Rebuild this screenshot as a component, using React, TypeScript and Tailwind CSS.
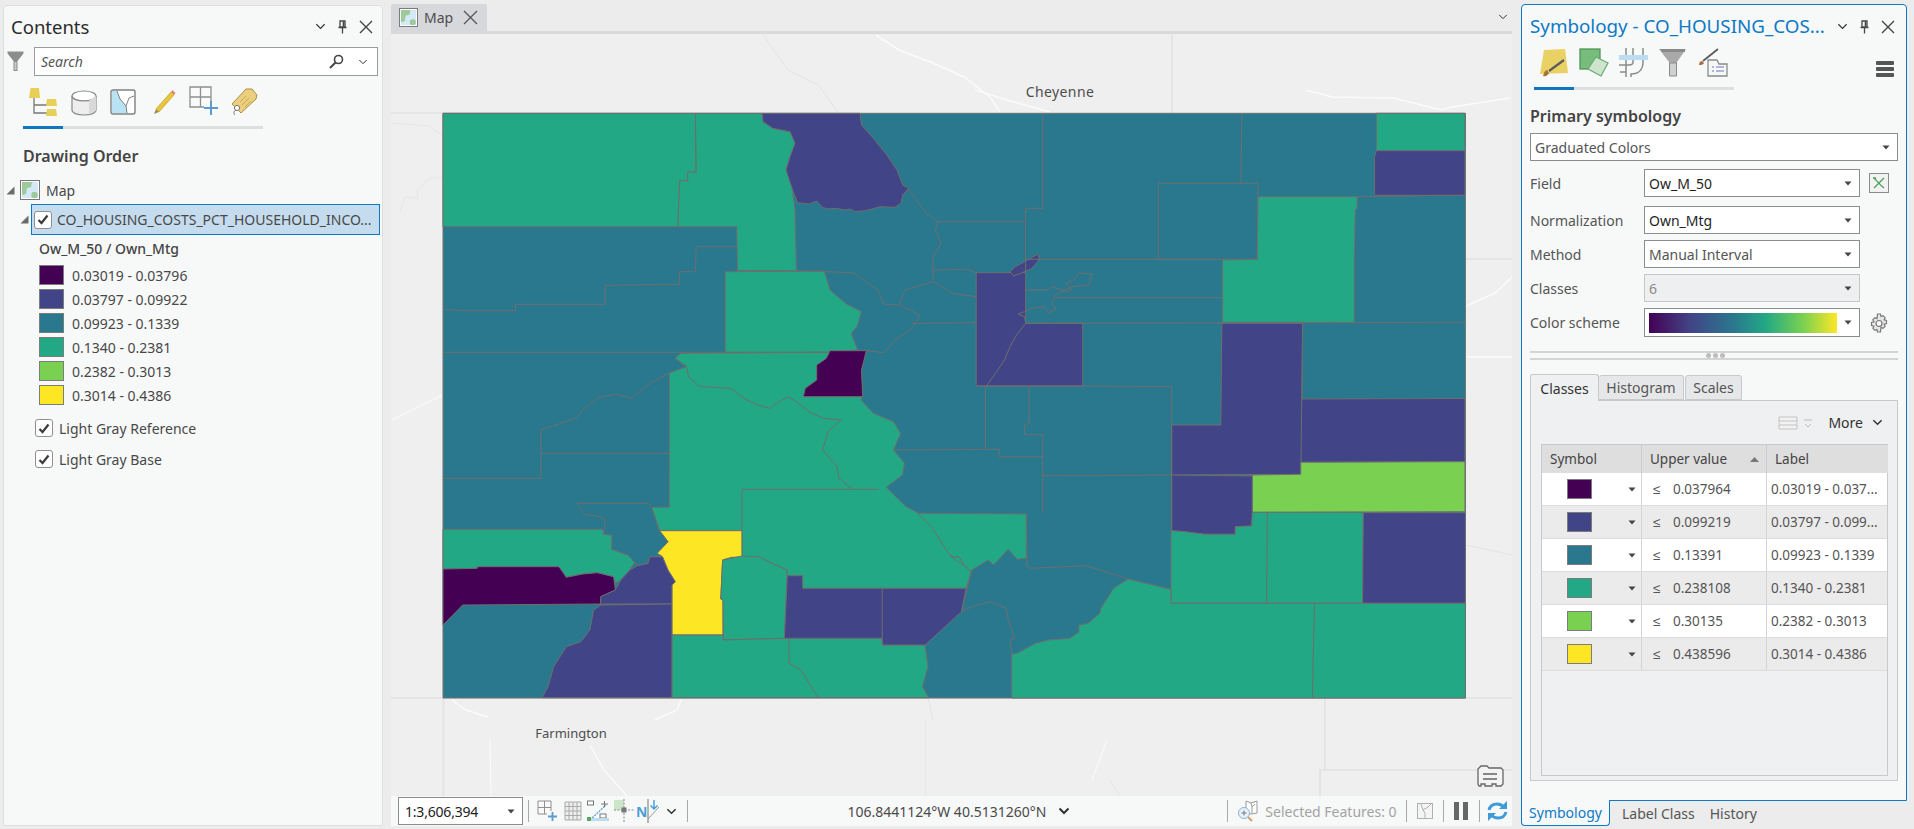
import React from 'react';

const TEAL = '#2a788e';
const GREEN = '#22a884';
const INDIGO = '#414487';
const PURPLE = '#440154';
const LIME = '#7ad151';
const YELLOW = '#fde725';

const counties: { fill: string; pts: string }[] = [
  // north west
  { fill: GREEN, pts: '443,113.3 695.4,113.3 696.2,172 687.7,172 687.7,180.7 679.7,180.7 677.8,226.7 443,226.7' },
  { fill: GREEN, pts: '695.4,113.3 762,113.3 763,121.7 772.7,128.3 790,131.7 795,143.3 790,156.7 786,170 792,186.7 795,210 796.4,270.7 737.5,270.7 736.7,226.7 677.8,226.7 679.7,180.7 687.7,180.7 687.7,172 696.2,172' },
  { fill: INDIGO, pts: '762,113.3 860,113.3 861.5,125 872,136.7 885.6,153.3 897,170 902.8,185 908.5,188.3 902.8,195 900.9,203.3 895,207.3 880,206.7 872,209 864.5,210.7 855,211.7 850,209 845,210 835.8,208.3 828,209 822.4,207.3 816.7,201 809,204 797.6,202.7 792.6,190 786,170 790,156.7 795,143.3 790,131.7 772.7,128.3 763,121.7' },
  { fill: GREEN, pts: '725.2,271.7 824.4,271 830,290 845.4,303.3 861.5,311.7 856.9,326.7 851.1,333.3 857.7,350 826.3,352.3 725.2,352.3' },
  // centre
  { fill: GREEN, pts: '675.1,358.3 680.8,353.3 826.3,352.3 866.4,350.7 861.5,370 862.6,396.7 860.8,400 873.5,413.3 893.5,421.7 900.7,433.3 893.5,450 904.4,463.3 902.6,475 886.2,487.3 906.2,506.7 918.9,513.3 1026.3,514 1026.3,558.3 1017.2,559.3 1008.2,549.3 993.6,565 988.2,560 971.8,570 967.2,588.3 802.6,588.3 802.6,575.7 787.3,575.7 787.3,570 771.7,563.3 759,556.7 741.9,557.3 741.9,530.7 659.7,530.7 651.7,507.3 669.2,507.3 669.4,372.7 686.6,366.7' },
  { fill: PURPLE, pts: '830,350.7 866.4,350.7 861.5,370 862.6,396.7 803.3,396.7 805.2,388.3 816.7,380 816.7,365 826.3,358.3' },
  // south west
  { fill: GREEN, pts: '443,529.3 602.7,529.3 603.8,534.3 611.8,535 611.8,549.3 628.1,555 635.4,561.7 628.1,571.7 620.8,580 615.4,583.3 613.6,576.7 597.2,572.7 582.7,574 566.3,577.3 559,566.7 477.3,566.7 477.3,568.3 443,569' },
  { fill: TEAL, pts: '577.2,503.3 648.1,503.3 651.7,507.3 659,530 668.1,541.7 657.2,553.3 662.6,556.7 649.9,556.7 648.1,563.3 637.2,565.7 628.1,555 611.8,549.3 611.8,535 603.8,534.3 605.2,520 600.8,516.7 584.5,514.3' },
  { fill: PURPLE, pts: '443,569 477.3,568.3 477.3,566.7 559,566.7 566.3,577.3 582.7,574 597.2,572.7 613.6,576.7 615.4,590 600.8,596.7 600.8,604 462.7,605 443,625' },
  { fill: INDIGO, pts: '600.8,596.7 615.4,590 620.8,580 629.9,570 637.2,565.7 648.1,563.3 649.9,556.7 662.6,556.7 668.1,570 675.4,581.7 672.1,585 672.1,604 600.8,604' },
  { fill: INDIGO, pts: '600.8,605 672.1,604 672.1,697.7 542,697.7 548.1,686.7 553.6,666.7 566.3,646.7 580.9,641.7 589.9,630 593.6,610' },
  { fill: YELLOW, pts: '659.7,530.7 741.9,530.7 741.9,557.3 731.7,557.3 722.6,560 720.8,599 723,600 723,635 672.1,635 672.1,585 675.4,581.7 668.1,570 662.6,556.7 657.2,553.3 668.1,541.7' },
  { fill: GREEN, pts: '722.6,560 741.9,556 759,556.7 771.7,563.3 787.3,570 784.4,638.3 723.3,640 723,600 720.8,599' },
  { fill: GREEN, pts: '672.1,635 723,635 723.3,640 784.4,638.3 881.8,638.3 882.6,645 925.1,645 928,666.7 922.5,686.7 928.7,697.7 672.1,697.7' },
  { fill: INDIGO, pts: '787.3,575.7 802.6,575.7 802.6,588.3 967.2,588.3 961.4,611.7 925.1,645 882.6,645 881.8,638.3 784.4,638.3' },
  // north east
  { fill: GREEN, pts: '1376.4,113.3 1465,113.3 1465,150.7 1376.4,150.7' },
  { fill: INDIGO, pts: '1376.4,150.7 1465,150.7 1465,195.3 1374.6,195.3 1374.6,156.7' },
  { fill: GREEN, pts: '1257.9,196.7 1357.1,196.7 1357.1,208.3 1355.3,210 1354.2,263 1354.2,322.3 1222.6,322.3 1222.6,260 1257.2,259.3' },
  { fill: INDIGO, pts: '976.2,272.7 1025.6,272.7 1025.6,323.3 1082.7,323.3 1082.7,386 976.2,386' },
  { fill: INDIGO, pts: '1010,271.7 1015.4,266.7 1026.3,260.7 1038.3,254 1039,260 1031.8,268.3 1020.9,273.3 1013.6,276' },
  { fill: INDIGO, pts: '1221.9,323.3 1302.6,323.3 1302,399 1465,398.5 1465,461.7 1300.8,462.3 1300.8,474.3 1171.7,475 1171.7,425 1220.8,425' },
  // south east
  { fill: INDIGO, pts: '1171.7,475 1252.4,476 1252.4,512.3 1251.7,526 1235.3,526.7 1235.3,534.3 1204.5,534.3 1184.5,531.7 1171.7,530.7' },
  { fill: LIME, pts: '1252.4,475 1300.8,474.3 1300.8,462.3 1465,461.7 1465,511.7 1252.4,512.3' },
  { fill: GREEN, pts: '1171,530.7 1184.5,531.7 1204.5,534.3 1235.3,534.3 1235.3,526.7 1251.7,526 1252.4,512.3 1363.3,512.3 1362.6,603.3 1171,603.3' },
  { fill: INDIGO, pts: '1363.3,512.7 1465.4,512.7 1465.4,603.3 1362.6,603.3' },
  { fill: GREEN, pts: '1011.8,698 1011.8,654.3 1017.2,653.3 1035.4,643.3 1048.1,640 1070,638.3 1079,631.7 1079,625 1088.1,623.3 1099.8,613.3 1100.9,608.3 1113.6,588.3 1128.1,579 1171,589.3 1171,603.3 1465.4,603.3 1465.4,698' },
];

const boundaries = [
  '443,309.3 466.5,310.7 515.5,310.7 515.5,304.3 605,304.3 605,285.3 679.3,284.3 679.3,271.7 695.4,271.7 696.2,246.7 736.7,246.7',
  '443,352.3 826.3,352.3',
  '796.4,270.7 853,272.7 868.4,283.3 877.9,290 883.7,304 899,305 904.7,290 933.4,281.7 932.7,270 933.4,256.7 941.1,243.3 935.3,230 938,221.7 925.8,213.3 914.3,196.7 908.5,188.3',
  '899,305 920,315 912.4,328.3 895.2,340 883.7,352.7 866.4,350.7',
  '938,221.7 1025.6,221.7',
  '933.4,270 966.4,269.3 976.2,272.7',
  '933.4,281.7 952.6,293.3 976.2,296.7',
  '912.4,323.3 976.2,322.7',
  '1042.7,113.3 1042.7,208.3 1025.6,208.3 1025.6,272.7',
  '1241.9,113.3 1240.8,183.3',
  '1158.3,183.3 1257.9,183.3 1257.9,196.7 1257.2,259.3 1158.3,259.3 1158.3,183.3',
  '1357,196.5 1465,195.3',
  '1025.6,259.3 1222.6,259.3',
  '1055.4,297.7 1222.6,297.7',
  '1025.6,323.3 1465,322.3',
  '1302.6,323.3 1301,462',
  '1082.7,386 1171.7,386.7 1171.7,475',
  '976.2,386 1082.7,386',
  '1025.6,323.3 1015.4,336.7 1010,346.7 1004.5,360 995.4,373.3 986.4,386',
  '1025.6,290 1048.1,290 1051.8,286.7 1068.1,291.7 1071.8,290 1065.6,283.3 1073.6,280 1079,272.7 1091.8,274 1089.2,285 1071.8,286.7 1055.4,295 1051.8,303.3 1056.1,309.3 1048.1,313.3 1044.5,306.7 1031.8,308.3 1024.5,311.7 1018,314 1024.5,316.7 1025.6,323.3',
  '985.5,386.7 985.5,449.3',
  '1029.2,386 1029.2,423.3 1024.5,425 1024.5,434.3 1042.7,435 1042.7,513.3',
  '893.5,450 999,449.3 999,456.7 1042.7,456.7',
  '1042.7,475.7 1171.7,475',
  '1171.7,475 1171.7,530',
  '1026.3,514 1027,566.7 1030.7,568.3 1086.3,565.7 1128.1,579',
  '950,556.7 959,557 964.5,565.7 971,571.7',
  '961.4,611.7 971.8,606.7 990,601.7 1006.3,608.3 1008.2,620 1014.7,638.3 1010,640 1011.8,654.3',
  '971.8,570 966.4,586.7 961.4,611.7',
  '1267.3,512.3 1266.6,603.3',
  '1314.6,603.3 1313.5,643.3 1312.4,697.7',
  '882.2,588.3 882.2,645',
  '789,638.3 789,663.3 800.8,670 818.2,697.7',
  '917,513.3 931.6,526.7 946.2,550 953.4,558.3 968,568.3',
  '741.9,530.7 741.9,489.3 878.9,489.3',
  '793.5,400 811.7,413.3 824.4,418.3 840.8,420 828,431.7 822.6,450 837.1,466.7 838.9,478.3 851.7,488.3',
  '675.1,358.3 686.6,366.7 688.5,376.7 700,386.7 730.6,388.3 744,398.3 757.2,405 769.9,408.3 779,401.7 788,396.7 793.5,400',
  '669.4,372.7 650.2,383.3 631,398.3 615.8,394 596.7,398.3 595.4,400 582.7,410 575.4,418.3 540.9,430 540.9,478.3 443,478.3',
  '540.9,453.3 669.2,453.3',
];

const baseRoads = [
  { d: '443,113 391,113', c: '#e5e5e5', w: 2 },
  { d: '1172,34 1172,113', c: '#e4e4e4', w: 2 },
  { d: '1465,259 1512,259', c: '#e4e4e4', w: 2 },
  { d: '391,698 1512,698', c: '#e4e4e4', w: 2 },
  { d: '443.5,698 443.5,796', c: '#e4e4e4', w: 2 },
  { d: '1325,698 1325,770', c: '#e4e4e4', w: 2 },
  { d: '1320,796 1320,770 1512,770', c: '#e4e4e4', w: 2 },
  { d: '925.5,720 925.5,796', c: '#e8e8e8', w: 1.5 },
  { d: '763,35 788,70 818.6,85 837.7,112', c: '#e4e4e4', w: 1 },
  { d: '876,35 899,50 933,63 964,77 990,97 1000,112', c: '#fbfbfb', w: 1.5 },
  { d: '975,90 1007,100 1050,112', c: '#fbfbfb', w: 1.5 },
  { d: '1306,90 1332,97 1393,98 1441,110 1452,107 1510,98', c: '#fbfbfb', w: 1.5 },
  { d: '392,123 428,126 442,135', c: '#e6e6e6', w: 1 },
  { d: '400,212 405,197 418,198 417,190 430,178 443,178', c: '#e6e6e6', w: 1 },
  { d: '1464,307 1495,293 1512,277', c: '#fbfbfb', w: 1.5 },
  { d: '1465,357 1512,357', c: '#fbfbfb', w: 1.5 },
  { d: '1466,545 1512,555', c: '#e4e4e4', w: 1 },
  { d: '452,700 466,710 488,717', c: '#fbfbfb', w: 1.5 },
  { d: '681,700 677,710 655,720', c: '#fbfbfb', w: 1.5 },
  { d: '928,698 933,720', c: '#e4e4e4', w: 1 },
  { d: '590,745 604,770 627,796', c: '#fbfbfb', w: 1.5 },
  { d: '490,740 491,796', c: '#fbfbfb', w: 1 },
  { d: '1107,740 1092,780', c: '#fbfbfb', w: 1 },
  { d: '1110,780 1120,796', c: '#e4e4e4', w: 1 },
  { d: '391,420 443,395', c: '#f7f7f7', w: 1.5 },
];

const legend = [
  { color: PURPLE, label: '0.03019 - 0.03796', upper: '0.037964', cell: '0.03019 - 0.037...' },
  { color: INDIGO, label: '0.03797 - 0.09922', upper: '0.099219', cell: '0.03797 - 0.099...' },
  { color: TEAL, label: '0.09923 - 0.1339', upper: '0.13391', cell: '0.09923 - 0.1339' },
  { color: GREEN, label: '0.1340 - 0.2381', upper: '0.238108', cell: '0.1340 - 0.2381' },
  { color: LIME, label: '0.2382 - 0.3013', upper: '0.30135', cell: '0.2382 - 0.3013' },
  { color: YELLOW, label: '0.3014 - 0.4386', upper: '0.438596', cell: '0.3014 - 0.4386' },
];

function Caret({ className = '' }: { className?: string }) {
  return (
    <svg width="8" height="5" viewBox="0 0 8 5" className={className}>
      <path d="M0.5 0.5h7L4 4.5z" fill="#444" />
    </svg>
  );
}

function Chevron({ size = 12, w = 1.6 }: { size?: number; w?: number }) {
  return (
    <svg width={size} height={size} viewBox="0 0 12 12" fill="none" stroke="#333" strokeWidth={w}>
      <path d="M1.5 3.5 6 8l4.5-4.5" />
    </svg>
  );
}

function PaneButtons() {
  return (
    <div className="flex items-center gap-[11px]">
      <Chevron size={11} w={1.3} />
      <svg width="11" height="14" viewBox="0 0 11 14" fill="none" stroke="#444" strokeWidth="1.3">
        <path d="M3 1h5v6H3zM1.5 7.5h8M5.5 8v5.5" />
        <path d="M6.500 1.500v5" strokeWidth="1.6" />
      </svg>
      <svg width="14" height="14" viewBox="0 0 14 14" stroke="#444" strokeWidth="1.4">
        <path d="M1 1l12 12M13 1 1 13" />
      </svg>
    </div>
  );
}

function Checkbox() {
  return (
    <span className="flex h-[18px] w-[18px] shrink-0 items-center justify-center rounded-[3px] border border-[#8f8f8f] bg-white">
      <svg width="12" height="11" viewBox="0 0 12 11" fill="none" stroke="#3c3c3c" strokeWidth="2.2">
        <path d="M1.5 6 4.5 9 10.5 1.5" />
      </svg>
    </span>
  );
}

function TreeArrow() {
  return (
    <svg width="9" height="9" viewBox="0 0 9 9">
      <path d="M8.5 0.5v8h-8z" fill="#6b6b6b" />
    </svg>
  );
}

function MapThumb({ size = 20 }: { size?: number }) {
  return (
    <svg width={size} height={size} viewBox="0 0 20 20">
      <rect x="0.5" y="0.5" width="19" height="19" fill="#fff" stroke="#777" />
      <rect x="2" y="2" width="16" height="16" fill="#d3e9f5" />
      <path d="M2 2h10l-1 5-4 1-1 6-4 1z" fill="#9dc99b" />
      <circle cx="14.5" cy="15" r="3.2" fill="#9dc99b" />
    </svg>
  );
}

function SelectBox({ value, disabled = false, dark = false }: { value: string; disabled?: boolean; dark?: boolean }) {
  return (
    <div
      className={`flex h-[28px] w-[216px] items-center justify-between border pl-[4px] pr-[7px] text-[14px] ${
        disabled ? 'border-[#c6c6c6] bg-[#eeeff0] text-[#8a8a8a]' : 'border-[#8c8c8c] bg-white'
      } ${dark ? 'text-[#1f1f1f]' : disabled ? '' : 'text-[#555]'}`}
    >
      <span>{value}</span>
      <Caret />
    </div>
  );
}

function FieldRow({ label, children, tail, className = '' }: { label: string; children: React.ReactNode; tail?: React.ReactNode; className?: string }) {
  return (
    <div className={`flex items-center ${className}`}>
      <span className="w-[114px] text-[14px] text-[#555]">{label}</span>
      {children}
      {tail}
    </div>
  );
}

function ContentsTabs() {
  return (
    <div className="flex h-[28px] items-end pl-[25px]">
      <svg width="30" height="28" viewBox="0 0 30 28" className="mr-[11px]">
        <path d="M5 10v15h13M5 17h13" fill="none" stroke="#777" strokeWidth="1.3" />
        <path d="M1.500 0h8.500l1 10H0z" fill="#e8cf58" />
        <path d="M18 11h9l1 7H17zM18 21h9l1 7H17z" fill="#e8cf58" />
      </svg>
      <svg width="28" height="28" viewBox="0 0 28 28" className="mr-[12px]">
        <ellipse cx="14" cy="8" rx="12" ry="5" fill="#fff" stroke="#8a8a8a" strokeWidth="1.2" />
        <path d="M2 8v14c0 3 5 5 12 5s12-2 12-5V8c0 3-5 5-12 5S2 11 2 8z" fill="#eee" stroke="#8a8a8a" strokeWidth="1.2" />
        <path d="M19 12.500v14l7-4V8z" fill="#d9d9d9" />
      </svg>
      <svg width="26" height="27" viewBox="0 0 26 27" className="mr-[15px]">
        <rect x="1" y="1" width="24" height="24" rx="2" fill="#fff" stroke="#808080" strokeWidth="1.4" />
        <path d="M2 2h5l3 8 6 7 1 7H2z" fill="#b9e2f5" />
        <path d="M7 2l3 8 6 7 1 7M16 17l3-8 5-2" fill="none" stroke="#808080" strokeWidth="1" />
      </svg>
      <svg width="26" height="28" viewBox="0 0 26 28" className="mr-[12px]">
        <path d="M5 21 20 4l3 3L8 24z" fill="#e9c53a" stroke="#b79a2b" strokeWidth="0.6" />
        <path d="M20 4l1.500-2 3 3-1.500 2z" fill="#e2857a" />
        <path d="M5 21l-2 5 5-2z" fill="#a08a58" />
      </svg>
      <svg width="30" height="30" viewBox="0 0 30 30" className="mr-[11px]">
        <path d="M1 1h21v20H1zM1 11h21M11.500 1v20" fill="#fafafa" stroke="#8f8f8f" strokeWidth="1.3" />
        <rect x="15" y="16" width="15" height="12" fill="#f7f8f8" />
        <path d="M22 15v14M15 22h14" stroke="#5b9bd2" strokeWidth="2" />
      </svg>
      <svg width="28" height="28" viewBox="0 0 28 28">
        <path d="M16 1h6l5 6-1 4L11 25 2 16z" fill="#eccf7e" stroke="#a98f4c" strokeWidth="1" />
        <path d="M10 14l6-6M12 17l7-7M15 19l6-6" stroke="#c7a850" strokeWidth="0.9" />
        <circle cx="7" cy="20" r="2.600" fill="#fff" stroke="#777" />
        <path d="M6 22c-2 1-3 3-1 5" fill="none" stroke="#777" />
      </svg>
    </div>
  );
}

function SymbologyTabs() {
  return (
    <div className="flex h-[29px] items-end pl-[10px]">
      <svg width="30" height="29" viewBox="0 0 30 29" className="mr-[9px]">
        <path d="M4 2 25 1l3 24-28 1z" fill="#ead163" />
        <path d="M3 28c3 1 5-1 6-3l-2-3c-3 1-3 4-4 6z" fill="#a5723c" />
        <path d="M9 23 24 12" stroke="#5c5c5c" strokeWidth="2.200" />
      </svg>
      <svg width="30" height="29" viewBox="0 0 30 29" className="mr-[10px]">
        <rect x="1" y="1" width="20" height="20" fill="#77bb7d" stroke="#4f9657" strokeWidth="1.300" />
        <path d="M17 9 29 15 22 28 9 21z" fill="#cde5cd" stroke="#6aa971" strokeWidth="1.200" />
      </svg>
      <svg width="29" height="29" viewBox="0 0 29 29" fill="none" stroke="#8a8a8a" strokeWidth="1.500" className="mr-[11px]">
        <rect x="0" y="7" width="29" height="5" fill="#bcdcf0" stroke="none" />
        <path d="M7 0v7M7 12v17M14 0v7M24 0v7" />
        <path d="M0 17h7M14 12v2c0 2-2 3-4 3H7M24 12v2c0 8-5 12-12 12v3" />
        <path d="M1 24h6" />
      </svg>
      <svg width="28" height="29" viewBox="0 0 28 29" className="mr-[11px]">
        <path d="M0 1h27L18 14v14h-8V14z" fill="#a9a9a9" />
        <path d="M1 1h25v3H3z" fill="#8a8a8a" />
        <path d="M10.500 15h7v13h-7z" fill="#d0d0d0" stroke="#8a8a8a" />
      </svg>
      <svg width="30" height="29" viewBox="0 0 30 29">
        <path d="M10 12h9l2 4h8v12H10z" fill="#f7f7f7" stroke="#8a8a8a" strokeWidth="1.300" />
        <path d="M14 19h2M18 19h8M14 23h2M18 23h8" stroke="#6678b5" strokeWidth="1.200" />
        <path d="M1 17c2 0 4 0 5-2l-2-2c-2 0-3 2-3 4z" fill="#a5723c" />
        <path d="M5 13 20 1" stroke="#5c5c5c" strokeWidth="1.800" />
      </svg>
    </div>
  );
}

function ContentsPane() {
  return (
    <aside className="ml-[3px] mt-[5px] flex h-[821px] w-[380px] flex-col rounded-t-[4px] border border-[#dedede] bg-[#f7f8f8] text-[#484848]">
      <div className="flex h-[41px] items-center justify-between pl-[7px] pr-[9px]">
        <span className="text-[18.5px] text-[#2b2b2b]">Contents</span>
        <PaneButtons />
      </div>
      <div className="flex h-[29px] items-center">
        <svg width="17" height="21" viewBox="0 0 17 21" className="ml-[3px]">
          <path d="M0.5 0.5h16v2L10.5 10v10h-4V10L0.5 2.500z" fill="#8d8d8d" />
          <path d="M7.500 11h2v8h-2z" fill="#c9c9c9" />
        </svg>
        <div className="ml-[10px] flex h-[29px] w-[344px] items-center border border-[#9a9a9a] bg-white pl-[6px] pr-[9px]">
          <span className="text-[14px] italic text-[#555]">Search</span>
          <svg width="15" height="15" viewBox="0 0 15 15" fill="none" stroke="#444" strokeWidth="1.6" className="ml-auto mr-[14px]">
            <circle cx="9.5" cy="5.5" r="4" />
            <path d="M6.5 8.5 1 14" strokeWidth="2" />
          </svg>
          <Chevron size={10} w={1.2} />
        </div>
      </div>
      <div className="mt-[12px]">
        <ContentsTabs />
      </div>
      <div className="ml-[19px] mt-[10px] flex h-[3px] w-[240px] bg-[#dedede]">
        <div className="h-full w-[40px] bg-[#0e76bd]" />
      </div>
      <div className="ml-[19px] mt-[16px] text-[16px] font-semibold leading-[22px] text-[#444]">Drawing Order</div>
      <div className="mt-[11px] flex h-[24px] items-center pl-[2px]">
        <TreeArrow />
        <span className="ml-[5px]"><MapThumb /></span>
        <span className="ml-[6px] text-[14px]">Map</span>
      </div>
      <div className="mt-[2px] flex items-center">
        <span className="ml-[16px]"><TreeArrow /></span>
        <div className="ml-[2px] flex h-[31px] w-[349px] items-center border border-[#0e7ac4] bg-[#c5dcef] pl-[2px]">
          <Checkbox />
          <span className="ml-[5px] whitespace-nowrap text-[14px]">CO_HOUSING_COSTS_PCT_HOUSEHOLD_INCO...</span>
        </div>
      </div>
      <div className="ml-[35px] mt-[4px] text-[14px] font-medium leading-[20px] text-[#444]">Ow_M_50 / Own_Mtg</div>
      <div className="ml-[35px] mt-[6px] flex flex-col gap-[4px]">
        {legend.map((item) => (
          <div key={item.label} className="flex h-[20px] items-center">
            <span className="h-[20px] w-[25px] border border-[#7c7c7c]" style={{ backgroundColor: item.color }} />
            <span className="ml-[8px] text-[14px]">{item.label}</span>
          </div>
        ))}
      </div>
      <div className="ml-[31px] mt-[11px] flex h-[24px] items-center">
        <Checkbox />
        <span className="ml-[6px] text-[14px]">Light Gray Reference</span>
      </div>
      <div className="ml-[31px] mt-[7px] flex h-[24px] items-center">
        <Checkbox />
        <span className="ml-[6px] text-[14px]">Light Gray Base</span>
      </div>
    </aside>
  );
}

function MapCanvas() {
  return (
    <div className="relative h-[762px] w-full overflow-hidden bg-[#efefef]">
      <svg width="1121" height="762" viewBox="391 34 1121 762" className="block">
        {baseRoads.map((r) => (
          <polyline key={r.d} points={r.d} fill="none" stroke={r.c} strokeWidth={r.w} />
        ))}
        <g stroke="#6e6e6e" strokeWidth="1" strokeLinejoin="round">
          <rect x="443" y="113.3" width="1022.4" height="584.7" fill={TEAL} />
          {counties.map((c) => (
            <polygon key={c.pts} points={c.pts} fill={c.fill} />
          ))}
          {boundaries.map((b) => (
            <polyline key={b} points={b} fill="none" />
          ))}
        </g>
      </svg>
      <span className="absolute left-[629px] top-[47px] w-[80px] text-center text-[14px] tracking-[0.4px] text-[#4d4d4d]">Cheyenne</span>
      <span className="absolute left-[140px] top-[690px] w-[80px] text-center text-[13px] text-[#4d4d4d]">Farmington</span>
      <svg width="28" height="24" viewBox="0 0 28 24" fill="#f4f4f4" stroke="#666" strokeWidth="1.3" className="absolute right-[8px] top-[730px]">
        <path d="M2 5l3-3h6l2 2h12l2 2v14l-2 2h-5v-2h-4v2H9v-2H5v2H3l-1-2z" />
        <path d="M7 10h14M7 15h14" />
      </svg>
    </div>
  );
}

function StatusBar() {
  const sep = 'h-[22px] w-px bg-[#a8a8a8]';
  return (
    <div className="flex h-[30px] items-center bg-[#f7f8f8] pl-[7px] text-[14px] text-[#4a4a4a]">
      <div className="flex h-[28px] w-[125px] items-center justify-between border border-[#8c8c8c] bg-white pl-[6px] pr-[7px] text-[#222]">
        <span className="tracking-[-0.2px]">1:3,606,394</span>
        <Caret />
      </div>
      <span className={`ml-[5px] ${sep}`} />
      <svg width="21" height="22" viewBox="0 0 21 22" className="ml-[8px]">
        <path d="M1 1h13v13H1zM1 7.500h13M7.500 1v13" fill="#fafafa" stroke="#8f8f8f" />
        <rect x="10" y="11" width="11" height="11" fill="#f7f8f8" />
        <path d="M15.500 12v9M11 16.500h9" stroke="#5b9bd2" strokeWidth="1.8" />
      </svg>
      <svg width="18" height="20" viewBox="0 0 18 20" className="ml-[6px]" fill="#eee" stroke="#aaa">
        <path d="M1 1h16v18H1zM1 5.500h16M1 10h16M1 14.500h16M5 1v18M9 1v18M13 1v18" />
      </svg>
      <svg width="22" height="22" viewBox="0 0 22 22" className="ml-[5px]">
        <path d="M3 20 19 5" stroke="#5b9bd2" strokeWidth="1.3" strokeDasharray="2 1" />
        <rect x="0.5" y="1" width="6" height="4" fill="#fff" stroke="#777" />
        <rect x="13" y="14" width="6" height="4" fill="#fff" stroke="#777" />
        <path d="M14 4h7M17.500 1v6" stroke="#777" />
        <rect x="0" y="18" width="22" height="3" fill="#bcdcf0" />
        <rect x="0" y="17" width="4" height="4" fill="#5ca65c" />
      </svg>
      <svg width="20" height="24" viewBox="0 0 20 24" className="ml-[5px]">
        <rect x="0" y="1" width="10" height="10" fill="#cde5c8" />
        <path d="M0 11h20" stroke="#888" strokeDasharray="2 1.5" />
        <path d="M10 0v24" stroke="#888" strokeDasharray="2 1.5" />
        <rect x="7.500" y="8.500" width="5" height="5" fill="#777" />
      </svg>
      <div className="ml-[2px] flex items-center">
        <span className="text-[14px] font-bold text-[#4b9ed9]">N</span>
        <svg width="14" height="24" viewBox="0 0 14 24" fill="none">
          <path d="M1 0v24" stroke="#777" />
          <path d="M1 20 12 8" stroke="#999" />
          <path d="M7 1v9M3.500 6.500 7 10l3.500-3.500" stroke="#4b9ed9" strokeWidth="1.5" />
        </svg>
      </div>
      <span className="ml-[5px]"><Chevron size={11} /></span>
      <span className={`ml-[10px] ${sep}`} />
      <span className="ml-[159px] whitespace-nowrap">106.8441124°W 40.5131260°N</span>
      <span className="ml-[12px]"><Chevron size={12} w={2} /></span>
      <span className={`ml-[157px] ${sep}`} />
      <svg width="22" height="22" viewBox="0 0 22 22" className="ml-[9px]">
        <path d="M9 1l5 2 6-2v12l-6 1-5-1z" fill="#fff" stroke="#999" />
        <path d="M14 3l1 4 3-3M15 7v6" fill="none" stroke="#999" />
        <circle cx="7" cy="13" r="5.500" fill="#e6f1fa" stroke="#8bb5d6" />
        <path d="M4.500 13h5M7 10.500v5" stroke="#777" />
        <path d="M11 17l4 4" stroke="#d1a06a" strokeWidth="2" />
      </svg>
      <span className="ml-[6px] whitespace-nowrap text-[#a3a3a3]">Selected Features: 0</span>
      <span className={`ml-[9px] ${sep}`} />
      <svg width="16" height="16" viewBox="0 0 16 16" className="ml-[10px]" fill="#f5f5f5" stroke="#b0b0b0">
        <rect x="0.5" y="0.5" width="15" height="15" />
        <path d="M4 1l2 6 2 3v5M6 7l5-3 3-3" fill="none" />
      </svg>
      <span className={`ml-[10px] ${sep}`} />
      <span className="ml-[10px] h-[18px] w-[5px] bg-[#666]" />
      <span className="ml-[4px] h-[18px] w-[5px] bg-[#666]" />
      <span className={`ml-[11px] ${sep}`} />
      <svg width="21" height="22" viewBox="0 0 21 22" fill="none" stroke="#3f9ad8" strokeWidth="3" className="ml-[7px]">
        <path d="M2 10c1-4 4-6 8-6 3 0 5 1 7 3" />
        <path d="M19 12c-1 4-4 6-8 6-3 0-5-1-7-3" />
        <path d="M20 1v8h-8zM1 21v-8h8z" fill="#3f9ad8" stroke="none" />
      </svg>
    </div>
  );
}

function MapView() {
  return (
    <main className="ml-[8px] flex w-[1121px] flex-col">
      <div className="flex h-[31px] items-end justify-between pr-[4px]">
        <div className="flex h-[27px] w-[96px] items-center rounded-t-[2px] bg-[#d6d8dc] pl-[8px]">
          <MapThumb size={19} />
          <span className="ml-[6px] text-[14px] text-[#4d4d4d]">Map</span>
          <svg width="15" height="15" viewBox="0 0 15 15" stroke="#555" strokeWidth="1.3" className="ml-[10px]">
            <path d="M1 1l13 13M14 1 1 14" />
          </svg>
        </div>
        <span className="mb-[9px]"><Chevron size={10} w={1.2} /></span>
      </div>
      <div className="h-[3px] bg-[#d9d9d9]" />
      <MapCanvas />
      <StatusBar />
    </main>
  );
}

function ClassRow({ item, alt }: { item: (typeof legend)[number]; alt: boolean }) {
  return (
    <div className={`flex h-[33px] w-[345px] items-center border-b border-[#dcdcdc] text-[13.5px] text-[#555] ${alt ? 'bg-[#ebebeb]' : 'bg-white'}`}>
      <div className="flex h-full w-[100px] items-center border-r border-[#d4d4d4] pl-[25px]">
        <span className="h-[20px] w-[25px] border border-[#7c7c7c]" style={{ backgroundColor: item.color }} />
        <Caret className="ml-[36px]" />
      </div>
      <div className="flex h-full w-[125px] items-center border-r border-[#d4d4d4] pl-[11px]">
        <span className="w-[20px]">≤</span>
        <span>{item.upper}</span>
      </div>
      <div className="whitespace-nowrap pl-[4px]">{item.cell}</div>
    </div>
  );
}

function SymbologyPane() {
  return (
    <aside className="ml-[9px] mt-[4px] flex h-[822px] w-[386px] flex-col text-[#555]">
      <div className="flex h-[797px] flex-col rounded-t-[4px] border border-[#0e7ac4] bg-[#f7f8f8] px-[8px]">
        <div className="flex h-[43px] items-center justify-between pr-[3px]">
          <span className="whitespace-nowrap text-[18.8px] text-[#0e7ac4]">Symbology - CO_HOUSING_COS...</span>
          <PaneButtons />
        </div>
        <div className="flex h-[34px] items-start justify-between">
          <SymbologyTabs />
          <div className="mr-[4px] mt-[13px] flex w-[18px] flex-col gap-[2px]">
            <span className="h-[4px] rounded-[1px] bg-[#555]" />
            <span className="h-[4px] rounded-[1px] bg-[#555]" />
            <span className="h-[4px] rounded-[1px] bg-[#555]" />
          </div>
        </div>
        <div className="ml-[4px] mt-[5px] flex h-[3px] w-[200px] bg-[#dedede]">
          <div className="h-full w-[40px] bg-[#0e76bd]" />
        </div>
        <div className="mt-[15px] text-[16px] font-semibold leading-[22px] text-[#444]">Primary symbology</div>
        <div className="mt-[6px] flex h-[28px] items-center justify-between border border-[#8c8c8c] bg-white pl-[4px] pr-[7px] text-[14px]">
          <span>Graduated Colors</span>
          <Caret />
        </div>
        <div className="mt-[8px] flex flex-col gap-[6px]">
          <FieldRow
            label="Field"
            tail={
              <span className="ml-[9px] flex h-[20px] w-[20px] items-center justify-center border border-[#8c8c8c] bg-[#f2f2f2]">
                <svg width="14" height="14" viewBox="0 0 14 14" fill="none" stroke="#4aa05a" strokeWidth="1.3">
                  <path d="M2 2c3 3 6 7 10 10M12 2C9 5 5 9 2 12M1 2h3" />
                </svg>
              </span>
            }
          >
            <SelectBox value="Ow_M_50" dark />
          </FieldRow>
          <FieldRow label="Normalization" className="mt-[3px]">
            <SelectBox value="Own_Mtg" dark />
          </FieldRow>
          <FieldRow label="Method">
            <SelectBox value="Manual Interval" />
          </FieldRow>
          <FieldRow label="Classes">
            <SelectBox value="6" disabled />
          </FieldRow>
          <FieldRow
            label="Color scheme"
            tail={
              <svg width="20" height="20" viewBox="0 0 20 20" className="ml-[9px]" fill="#e6e6e6" stroke="#777" strokeWidth="1.2">
                <path d="M8.500 1h3l.5 2.500 2-.9 2.100 2.100-1 2.200 2.400.6v3l-2.400.6 1 2.200-2.100 2.100-2-.9L11.500 19h-3L8 16.500l-2 .9-2.100-2.100 1-2.200L2.500 12.500v-3l2.400-.6-1-2.200L6 4.600l2 .9z" />
                <circle cx="10" cy="10.500" r="3" fill="#f7f8f8" />
              </svg>
            }
          >
            <div className="flex h-[29px] w-[216px] items-center justify-between border border-[#8c8c8c] bg-white pl-[4px] pr-[7px]">
              <span className="h-[20px] w-[188px] bg-[linear-gradient(to_right,#440154_0%,#414487_22%,#2a788e_45%,#22a884_62%,#7ad151_82%,#fde725_100%)]" />
              <Caret />
            </div>
          </FieldRow>
        </div>
        <div className="mt-[14px] flex h-[9px] flex-col justify-between">
          <div className="h-[2px] bg-[#d4d4d4]" />
          <div className="h-[2px] bg-[#d4d4d4]" />
        </div>
        <div className="relative flex h-0 justify-center gap-[2px]">
          <span className="absolute -top-[7px] left-[176px] h-[5px] w-[5px] rounded-full bg-[#bdbdbd]" />
          <span className="absolute -top-[7px] left-[183px] h-[5px] w-[5px] rounded-full bg-[#bdbdbd]" />
          <span className="absolute -top-[7px] left-[190px] h-[5px] w-[5px] rounded-full bg-[#bdbdbd]" />
        </div>
        <div className="mt-[13px] flex h-[27px] items-end text-[14px]">
          <div className="z-10 -mb-px flex h-[27px] w-[69px] items-center justify-center rounded-t-[3px] border border-b-0 border-[#c9c9c9] bg-[#eff0f1] text-[#333]">Classes</div>
          <div className="flex h-[25px] w-[85px] items-center justify-center rounded-t-[3px] border border-l-0 border-[#c9c9c9] bg-[#e6e7e8]">Histogram</div>
          <div className="ml-px flex h-[25px] w-[57px] items-center justify-center rounded-t-[3px] border border-[#c9c9c9] bg-[#e6e7e8]">Scales</div>
        </div>
        <div className="flex h-[381px] flex-col border border-[#c9c9c9] bg-[#eff0f1] px-[10px]">
          <div className="flex h-[43px] items-center justify-end pr-[4px]">
            <svg width="20" height="14" viewBox="0 0 20 14" fill="#f2f2f2" stroke="#c4c4c4">
              <path d="M1 1h18v12H1zM1 5h18M1 9h18" />
            </svg>
            <svg width="10" height="10" viewBox="0 0 10 10" fill="none" stroke="#bdbdbd" strokeWidth="1" className="ml-[5px] mt-[3px]">
              <path d="M1 1h8M2 5l3 3 3-3" />
            </svg>
            <span className="ml-[15px] text-[14px] text-[#333]">More</span>
            <span className="ml-[9px]"><Chevron size={11} w={1.6} /></span>
          </div>
          <div className="flex h-[332px] w-[347px] flex-col border border-[#c9c9c9]">
            <div className="flex h-[28px] w-[346px] shrink-0 items-center bg-[#dedede] text-[13.5px] text-[#444]">
              <div className="flex h-full w-[100px] items-center border-r border-[#cccccc] pl-[8px]">Symbol</div>
              <div className="flex h-full w-[125px] items-center border-r border-[#cccccc] pl-[8px]">
                Upper value
                <svg width="9" height="5" viewBox="0 0 9 5" className="ml-auto mr-[7px]">
                  <path d="M0 5h9L4.500 0z" fill="#777" />
                </svg>
              </div>
              <div className="pl-[8px]">Label</div>
            </div>
            {legend.map((item, i) => (
              <ClassRow key={item.upper} item={item} alt={i % 2 === 1} />
            ))}
          </div>
        </div>
      </div>
      <div className="flex h-[25px] items-center text-[14px]">
        <div className="relative z-10 -mt-[2px] flex h-[26px] w-[89px] items-center justify-center rounded-b-[4px] border border-t-0 border-[#0e7ac4] bg-[#f7f8f8] text-[#0e7ac4]">Symbology</div>
        <span className="ml-[12px]">Label Class</span>
        <span className="ml-[15px]">History</span>
      </div>
    </aside>
  );
}

export default function App() {
  return (
    <div className="flex h-[829px] w-[1914px] overflow-hidden bg-[#ececec] font-['Noto_Sans',sans-serif]">
      <ContentsPane />
      <MapView />
      <SymbologyPane />
    </div>
  );
}
